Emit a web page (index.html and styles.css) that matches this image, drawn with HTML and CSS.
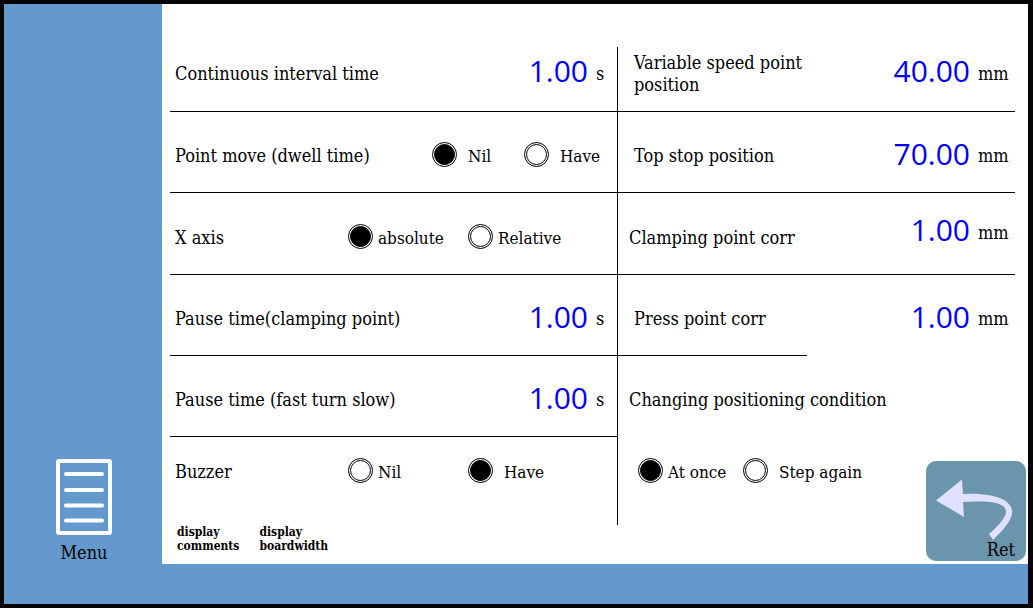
FILE: index.html
```html
<!DOCTYPE html>
<html lang="en">
<head>
<meta charset="utf-8">
<title>Machine parameters</title>
<link rel="stylesheet" href="styles.css">
</head>
<body class="screen">
  <nav class="sidebar">
    <button class="menu" type="button">
      <svg class="menu-icon" width="56" height="76" viewBox="0 0 56 76" aria-hidden="true">
        <rect x="2" y="2" width="52" height="72" rx="1" fill="none" stroke="#fff" stroke-width="4"/>
        <path d="M10 15H46M10 31H46M10 46.500H46M10 61.500H46" stroke="#fff" stroke-width="4" stroke-linecap="round"/>
      </svg>
      <span>Menu</span>
    </button>
  </nav>
  <main class="panel">
    <form class="settings">
      <div class="column column-left">
        <div class="row">
          <label class="name" for="interval">Continuous interval time</label>
          <span class="reading"><input class="value" id="interval" value="1.00"><span class="unit">s</span></span>
        </div>
        <div class="row" role="radiogroup" aria-labelledby="move">
          <span class="name" id="move">Point move (dwell time)</span>
          <span class="options options-narrow">
            <label class="option spaced"><input class="dot" type="radio" name="move" checked>Nil</label>
            <label class="option spaced"><input class="dot" type="radio" name="move">Have</label>
          </span>
        </div>
        <div class="row" role="radiogroup" aria-labelledby="axis">
          <span class="name" id="axis">X axis</span>
          <span class="options">
            <label class="option"><input class="dot" type="radio" name="axis" checked>absolute</label>
            <label class="option"><input class="dot" type="radio" name="axis">Relative</label>
          </span>
        </div>
        <div class="row">
          <label class="name" for="pause-clamp">Pause time(clamping point)</label>
          <span class="reading"><input class="value" id="pause-clamp" value="1.00"><span class="unit">s</span></span>
        </div>
        <div class="row">
          <label class="name" for="pause-slow">Pause time (fast turn slow)</label>
          <span class="reading"><input class="value" id="pause-slow" value="1.00"><span class="unit">s</span></span>
        </div>
        <div class="row" role="radiogroup" aria-labelledby="buzzer">
          <span class="name" id="buzzer">Buzzer</span>
          <span class="options">
            <label class="option"><input class="dot" type="radio" name="buzzer">Nil</label>
            <label class="option spaced"><input class="dot" type="radio" name="buzzer" checked>Have</label>
          </span>
        </div>
      </div>
      <div class="column column-right">
        <div class="row">
          <label class="name" for="speed-point">Variable speed point position</label>
          <span class="reading"><input class="value" id="speed-point" value="40.00"><span class="unit">mm</span></span>
        </div>
        <div class="row">
          <label class="name" for="top-stop">Top stop position</label>
          <span class="reading"><input class="value" id="top-stop" value="70.00"><span class="unit">mm</span></span>
        </div>
        <div class="row">
          <label class="name name-outset" for="clamp-corr">Clamping point corr</label>
          <span class="reading reading-raised"><input class="value" id="clamp-corr" value="1.00"><span class="unit">mm</span></span>
        </div>
        <div class="row row-short-rule">
          <label class="name" for="press-corr">Press point corr</label>
          <span class="reading"><input class="value" id="press-corr" value="1.00"><span class="unit">mm</span></span>
        </div>
        <div class="row row-open">
          <span class="name name-outset" id="condition">Changing positioning condition</span>
        </div>
        <div class="row" role="radiogroup" aria-labelledby="condition">
          <span class="options options-start">
            <label class="option"><input class="dot" type="radio" name="condition" checked>At once</label>
            <label class="option spaced"><input class="dot" type="radio" name="condition">Step again</label>
          </span>
        </div>
      </div>
    </form>
    <div class="toggles">
      <button class="toggle" type="button">display<br>comments</button>
      <button class="toggle" type="button">display<br>boardwidth</button>
    </div>
    <button class="return" type="button">
      <svg class="return-icon" viewBox="0 0 100 100" aria-hidden="true">
        <path d="M10 39.500 36 18.500 37 33C54 32 69 34 78 39C88 45 88 53 82 62C78 68 72 74 67 79L63 73C69 68 75 62 79 55C82 48 78 44 70 42C60 40 50 40.500 37 41L38 56Z" fill="#e0e0ff"/>
      </svg>
      <span class="return-text">Ret</span>
    </button>
  </main>
</body>
</html>
```
FILE: styles.css
```css
*,
*::before {
  box-sizing: border-box;
}

.screen {
  display: grid;
  grid-template-columns: 158px 1fr;
  min-height: 100vh;
  margin: 0;
  padding-bottom: 40px;
  border: 4px solid #050505;
  border-right-width: 5px;
  background: #6399cc;
  color: #000;
  font: 18px/22px "DejaVu Serif Condensed", "DejaVu Serif", serif;
  font-stretch: condensed;
}

button,
input {
  margin: 0;
  padding: 0;
  border: 0;
  background: none;
  color: inherit;
  font: inherit;
}

.sidebar {
  display: flex;
  flex-direction: column;
  justify-content: flex-end;
  align-items: center;
  padding-left: 2px;
}

.menu {
  display: flex;
  flex-direction: column;
  align-items: center;
  gap: 7px;
}

.panel {
  position: relative;
  display: flex;
  flex-direction: column;
  padding: 43px 13px 0 8px;
  background: #fff;
}

.settings {
  display: grid;
  grid-template-columns: 448fr 397fr;
}

.column {
  display: grid;
  grid-template-rows: 65px 81px 82px 81px 81px 88px;
}

.column-left {
  border-right: 1px solid #000;
}

.row {
  display: flex;
  justify-content: space-between;
  align-items: center;
  padding-top: 7px;
  background: linear-gradient(#000, #000) left bottom / 100% 1px no-repeat;
}

.row:first-child {
  padding: 0 0 12px;
}

.row:last-child {
  padding: 0 0 18px;
  background: none;
}

.row-short-rule {
  background-size: 189px 1px;
}

.row-open {
  background: none;
}

.name {
  padding-left: 5px;
}

.column-right .name {
  max-width: 210px;
  padding-left: 16px;
}

.column-right .name-outset {
  max-width: none;
  padding-left: 11px;
}

.reading {
  display: flex;
  align-items: center;
  gap: 8px;
}

.reading-raised {
  padding-bottom: 10px;
}

.value {
  width: 100px;
  height: 46px;
  padding-bottom: 6px;
  color: #00f;
  font: 30px/40px "Open Sans", "Noto Sans", sans-serif;
  text-align: right;
}

.unit {
  width: 21px;
}

.column-right .unit {
  width: 37px;
}

.options {
  display: grid;
  grid-template-columns: 120px 149px;
  font-size: 17px;
}

.options-narrow {
  grid-template-columns: 92px 93px;
}

.options-start {
  grid-template-columns: 105px 150px;
  padding-left: 20px;
}

.option {
  display: flex;
  align-items: center;
  gap: 5px;
}

.spaced {
  gap: 11px;
}

.dot {
  appearance: none;
  flex: none;
  width: 25px;
  height: 25px;
  margin-bottom: 3px;
  padding: 1px;
  border: 1px solid #000;
  border-radius: 50%;
}

.dot::before {
  content: "";
  display: block;
  width: 21px;
  height: 21px;
  border: 1px solid #000;
  border-radius: 50%;
}

.dot:checked::before {
  background: #000;
}

.toggles {
  display: flex;
  gap: 20px;
  padding: 0 0 11px 7px;
}

.toggle {
  font-size: 12px;
  font-weight: bold;
  line-height: 14px;
  text-align: left;
}

.return {
  position: absolute;
  right: 2px;
  bottom: 3px;
  width: 100px;
  height: 100px;
  border-radius: 10px;
  background: #6b94ad;
}

.return-icon {
  display: block;
  width: 100px;
  height: 100px;
}

.return-text {
  position: absolute;
  right: 11px;
  bottom: 0;
}
```
